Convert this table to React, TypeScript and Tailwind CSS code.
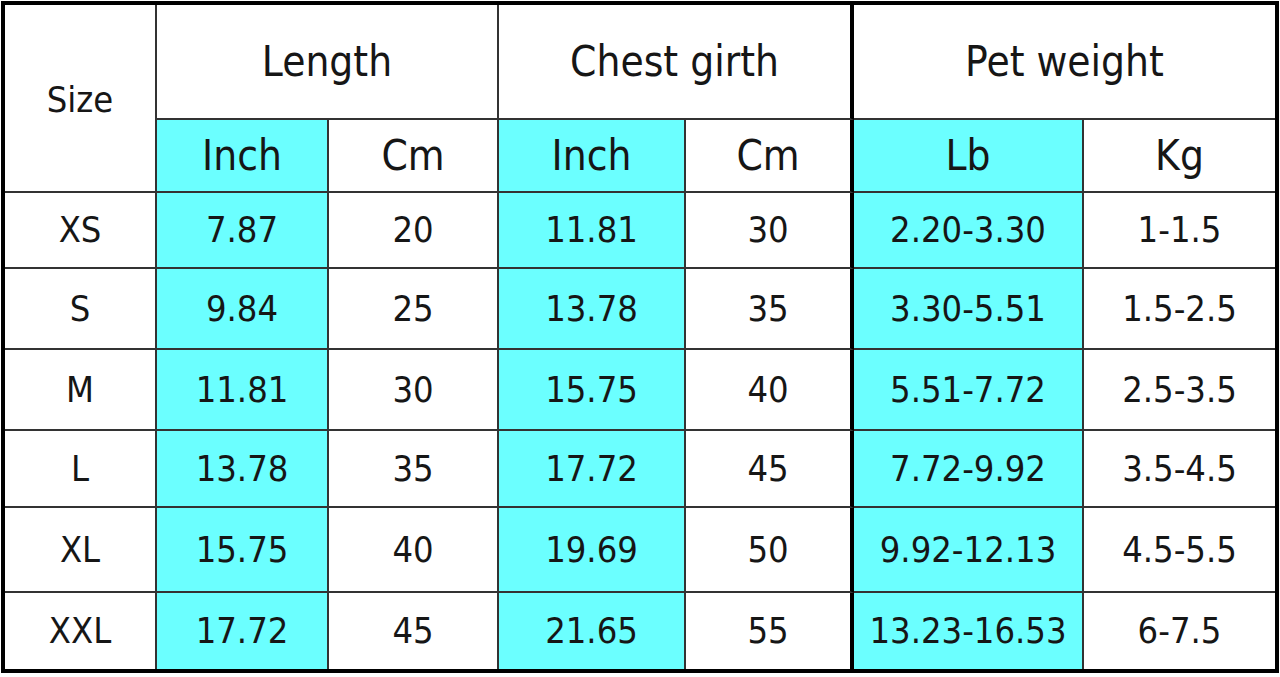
const cols = ["Inch", "Cm", "Inch", "Cm", "Lb", "Kg"];

const rows = [
  ["XS", "7.87", "20", "11.81", "30", "2.20-3.30", "1-1.5"],
  ["S", "9.84", "25", "13.78", "35", "3.30-5.51", "1.5-2.5"],
  ["M", "11.81", "30", "15.75", "40", "5.51-7.72", "2.5-3.5"],
  ["L", "13.78", "35", "17.72", "45", "7.72-9.92", "3.5-4.5"],
  ["XL", "15.75", "40", "19.69", "50", "9.92-12.13", "4.5-5.5"],
  ["XXL", "17.72", "45", "21.65", "55", "13.23-16.53", "6-7.5"],
];

// inch / inch / lb columns are highlighted
const cyan = [0, 2, 4];

const rightBorder = (c: number) =>
  c === 6 ? "" : c === 4 ? "border-r-4 border-r-black" : "border-r-2";

export default function App() {
  return (
    <div className="w-[1280px] h-[677px] bg-white pt-px pl-px text-[#161616] [font-family:'DejaVu_Sans_Condensed','DejaVu_Sans',sans-serif] [font-stretch:condensed]">
      <div className="w-[1278px] h-[672px] border-4 border-black grid grid-cols-[152px_172px_170px_187px_168px_230px_191px] grid-rows-[115px_73px_76px_81px_81px_77px_85px_76px]">
        <div className="row-span-2 border-r-2 border-b-2 border-[#333] flex items-center justify-center text-[36px] leading-none pt-1">
          Size
        </div>
        <div className="col-span-2 border-r-2 border-b-2 border-[#333] flex items-center justify-center text-[42px] leading-none">
          Length
        </div>
        <div className="col-span-2 border-r-4 border-r-black border-b-2 border-b-[#333] flex items-center justify-center text-[42px] leading-none">
          Chest girth
        </div>
        <div className="col-span-2 border-b-2 border-[#333] flex items-center justify-center text-[42px] leading-none">
          Pet weight
        </div>
        {cols.map((c, i) => (
          <div
            key={i}
            className={`${rightBorder(i + 1)} border-b-2 border-[#333] ${i === 3 ? "border-r-black" : ""} flex items-center justify-center text-[42px] leading-none ${cyan.includes(i) ? "bg-[#6bffff]" : "bg-white"}`}
          >
            {c}
          </div>
        ))}
        {rows.map((r, ri) =>
          r.map((v, ci) => (
            <div
              key={`${ri}-${ci}`}
              className={`${rightBorder(ci)} ${ri < rows.length - 1 ? "border-b-2" : ""} border-[#333] ${ci === 4 ? "border-r-black" : ""} flex items-center justify-center text-[36px] leading-none ${cyan.includes(ci - 1) ? "bg-[#6bffff]" : "bg-white"}`}
            >
              {v}
            </div>
          ))
        )}
      </div>
    </div>
  );
}
